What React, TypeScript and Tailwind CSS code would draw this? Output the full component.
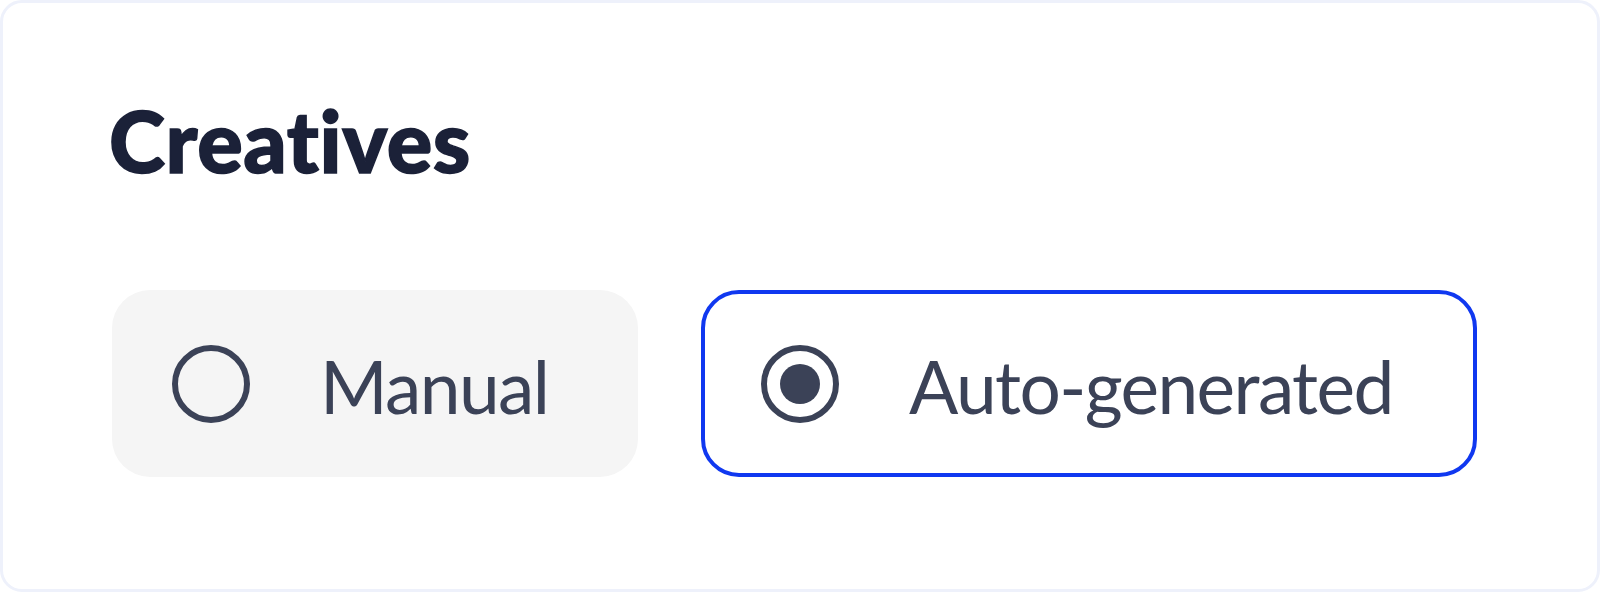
import React, { useState } from 'react';

const options = [
  { label: 'Manual', width: 'w-[526px]' },
  { label: 'Auto-generated', width: 'w-[776px]' },
];

const Radio: React.FC<{ checked: boolean }> = ({ checked }) => (
  <svg width="80" height="80" viewBox="0 0 80 80" className="shrink-0">
    <circle cx="40" cy="40" r="36" fill="none" stroke="#3b4257" strokeWidth="6" />
    {checked && <circle cx="40" cy="40" r="20" fill="#3b4257" />}
  </svg>
);

const App: React.FC = () => {
  const [selected, setSelected] = useState('Auto-generated');

  return (
    <div className="w-[1600px] h-[592px] bg-white" style={{ fontFamily: 'Lato, sans-serif' }}>
      <div className="h-full rounded-[22px] border-[3px] border-[#eef1fb] pl-[106px] pt-[95px]">
        <h2 className="text-[85px] leading-none font-black tracking-[0.6px] text-[#1b2138] [-webkit-text-stroke:1.5px_#1b2138]">
          Creatives
        </h2>
        <div className="flex gap-[63px] mt-[107px] ml-[3px]">
          {options.map(opt => {
            const active = selected === opt.label;
            return (
              <button
                key={opt.label}
                onClick={() => setSelected(opt.label)}
                className={
                  active
                    ? `${opt.width} flex items-center h-[187px] pl-[55px] rounded-[38px] border-4 border-[#1038f0] bg-white`
                    : `${opt.width} flex items-center h-[187px] pl-[55px] rounded-[38px] border-4 border-transparent bg-[#f5f5f5]`
                }
              >
                <Radio checked={active} />
                <span className="ml-[69px] pt-[5px] text-[73px] leading-none tracking-[-1.6px] text-[#3b4257]">
                  {opt.label}
                </span>
              </button>
            );
          })}
        </div>
      </div>
    </div>
  );
};

export default App;
